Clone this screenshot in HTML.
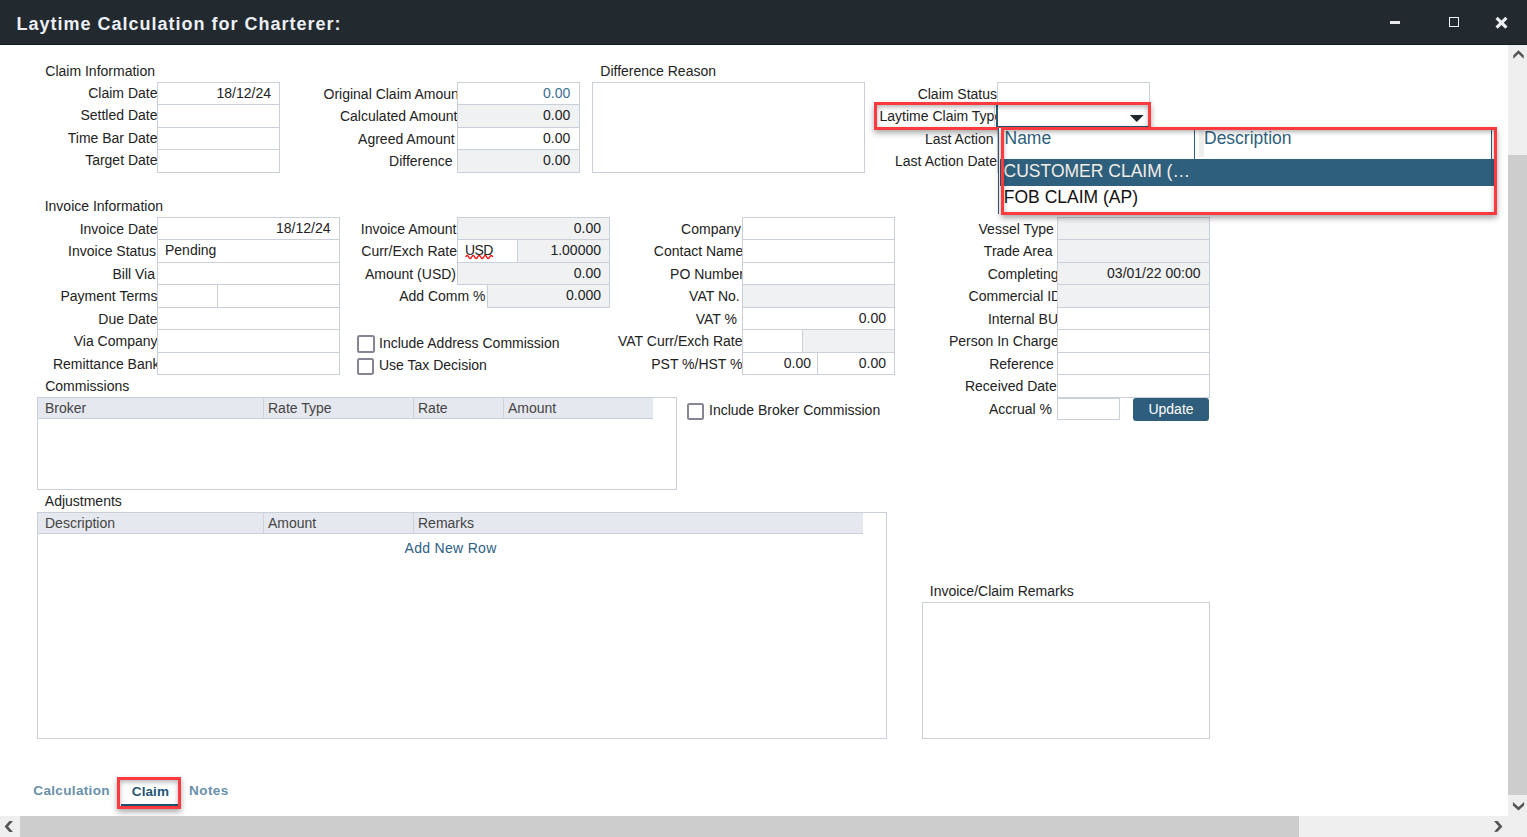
<!DOCTYPE html>
<html><head><meta charset="utf-8"><title>Laytime Calculation</title>
<style>
html,body{margin:0;padding:0;width:1527px;height:837px;overflow:hidden;background:#fff;}
body{position:relative;font-family:"Liberation Sans",sans-serif;}
.t{position:absolute;white-space:nowrap;}
.b{position:absolute;}
</style></head><body>
<div class="b" style="left:0px;top:0px;width:1527px;height:45px;background:#222a30;"></div>
<div class="b" style="left:0px;top:44px;width:1527px;height:1px;background:#141d22;"></div>
<div class="t" style="top:12.86px;font-size:18px;line-height:22px;color:#eceff3;font-weight:bold;letter-spacing:1px;left:16.5px;">Laytime Calculation for Charterer:</div>
<div class="b" style="left:1390px;top:20.5px;width:10px;height:3.0px;background:#e8eaed;"></div>
<div class="b" style="left:1449px;top:17px;width:7.9px;height:7.9px;border:1.3px solid #f4f5f7;"></div>
<svg class="b" style="left:1494px;top:15px" width="16" height="16" viewBox="0 0 16 16"><path d="M2.6 2.85 L12.4 12.65 M12.4 2.85 L2.6 12.65" stroke="#eceef1" stroke-width="3.2" stroke-linecap="butt"/></svg>
<div class="t" style="top:62.75px;font-size:14px;line-height:17px;color:#222;left:45.3px;">Claim Information</div>
<div class="t" style="top:85.05px;font-size:14px;line-height:17px;color:#222222;left:-242.5px;width:400px;text-align:right;">Claim Date</div>
<div class="t" style="top:107.05px;font-size:14px;line-height:17px;color:#222222;left:-242.5px;width:400px;text-align:right;">Settled Date</div>
<div class="t" style="top:130.05px;font-size:14px;line-height:17px;color:#222222;left:-242.5px;width:400px;text-align:right;">Time Bar Date</div>
<div class="t" style="top:152.05px;font-size:14px;line-height:17px;color:#222222;left:-242.5px;width:400px;text-align:right;">Target Date</div>
<div class="b" style="left:157px;top:82px;width:123px;height:23px;background:#fff;box-shadow:inset 0 0 0 1px #c9d0d9;"></div>
<div class="b" style="left:157px;top:104px;width:123px;height:24px;background:#fff;box-shadow:inset 0 0 0 1px #c9d0d9;"></div>
<div class="b" style="left:157px;top:127px;width:123px;height:23px;background:#fff;box-shadow:inset 0 0 0 1px #c9d0d9;"></div>
<div class="b" style="left:157px;top:149px;width:123px;height:24px;background:#fff;box-shadow:inset 0 0 0 1px #c9d0d9;"></div>
<div class="t" style="top:84.65px;font-size:14px;line-height:17px;color:#222222;left:-129px;width:400px;text-align:right;">18/12/24</div>
<div class="t" style="top:85.65px;font-size:14px;line-height:17px;color:#222222;left:58.89999999999998px;width:400px;text-align:right;">Original Claim Amoun</div>
<div class="t" style="top:107.65px;font-size:14px;line-height:17px;color:#222222;left:57.5px;width:400px;text-align:right;">Calculated Amount</div>
<div class="t" style="top:130.65px;font-size:14px;line-height:17px;color:#222222;left:54.60000000000002px;width:400px;text-align:right;">Agreed Amount</div>
<div class="t" style="top:152.65px;font-size:14px;line-height:17px;color:#222222;left:52.60000000000002px;width:400px;text-align:right;">Difference</div>
<div class="b" style="left:457px;top:82px;width:123px;height:23px;background:#fff;box-shadow:inset 0 0 0 1px #c9d0d9;"></div>
<div class="b" style="left:457px;top:104px;width:123px;height:24px;background:#eff1f3;box-shadow:inset 0 0 0 1px #c9d0d9;"></div>
<div class="b" style="left:457px;top:127px;width:123px;height:23px;background:#fff;box-shadow:inset 0 0 0 1px #c9d0d9;"></div>
<div class="b" style="left:457px;top:149px;width:123px;height:24px;background:#eff1f3;box-shadow:inset 0 0 0 1px #c9d0d9;"></div>
<div class="t" style="top:84.65px;font-size:14px;line-height:17px;color:#3b6f96;left:170.29999999999995px;width:400px;text-align:right;">0.00</div>
<div class="t" style="top:106.65px;font-size:14px;line-height:17px;color:#222222;left:170.29999999999995px;width:400px;text-align:right;">0.00</div>
<div class="t" style="top:129.65px;font-size:14px;line-height:17px;color:#222222;left:170.29999999999995px;width:400px;text-align:right;">0.00</div>
<div class="t" style="top:151.65px;font-size:14px;line-height:17px;color:#222222;left:170.29999999999995px;width:400px;text-align:right;">0.00</div>
<div class="t" style="top:62.75px;font-size:14px;line-height:17px;color:#222;left:600.3px;">Difference Reason</div>
<div class="b" style="left:592px;top:82px;width:273px;height:91px;background:#fff;box-shadow:inset 0 0 0 1px #c9d0d9;"></div>
<div class="t" style="top:85.65px;font-size:14px;line-height:17px;color:#222222;left:597px;width:400px;text-align:right;">Claim Status</div>
<div class="t" style="top:107.65px;font-size:14px;line-height:17px;color:#222222;left:879.5px;width:116.5px;overflow:hidden;">Laytime Claim Type</div>
<div class="t" style="top:130.65px;font-size:14px;line-height:17px;color:#222222;left:593.5px;width:400px;text-align:right;">Last Action</div>
<div class="t" style="top:152.65px;font-size:14px;line-height:17px;color:#222222;left:597px;width:400px;text-align:right;">Last Action Date</div>
<div class="b" style="left:997px;top:82px;width:153px;height:23.5px;background:#fff;box-shadow:inset 0 0 0 1px #c9d0d9;"></div>
<div class="b" style="left:996px;top:105px;width:154px;height:22px;background:#fff;border-left:2px solid #2a5a76;border-bottom:1px solid #2a5a76;box-sizing:border-box;"></div>
<div class="b" style="left:994px;top:105px;width:1px;height:21px;background:#cfd5dc;"></div>
<svg class="b" style="left:1128px;top:114px" width="17" height="9" viewBox="0 0 17 9"><path d="M1.8 1.1 L15.7 1.1 L8.75 7.9 Z" fill="#1f272d"/></svg>
<div class="b" style="left:997px;top:127px;width:153px;height:23.5px;background:#fff;box-shadow:inset 0 0 0 1px #c9d0d9;"></div>
<div class="b" style="left:997px;top:149.5px;width:153px;height:23.5px;background:#fff;box-shadow:inset 0 0 0 1px #c9d0d9;"></div>
<div class="b" style="left:874px;top:102px;width:277px;height:28px;box-sizing:border-box;border:3px solid #fd3b3e;box-shadow:0 3px 6px rgba(0,0,0,0.35), inset 0 2px 5px rgba(0,0,0,0.3);"></div>
<div class="t" style="top:197.65px;font-size:14px;line-height:17px;color:#222;left:44.7px;">Invoice Information</div>
<div class="t" style="top:220.65px;font-size:14px;line-height:17px;color:#222222;left:-242.5px;width:400px;text-align:right;">Invoice Date</div>
<div class="t" style="top:242.65px;font-size:14px;line-height:17px;color:#222222;left:-244px;width:400px;text-align:right;">Invoice Status</div>
<div class="t" style="top:265.65px;font-size:14px;line-height:17px;color:#222222;left:-245px;width:400px;text-align:right;">Bill Via</div>
<div class="t" style="top:287.65px;font-size:14px;line-height:17px;color:#222222;left:-242.5px;width:400px;text-align:right;">Payment Terms</div>
<div class="t" style="top:310.65px;font-size:14px;line-height:17px;color:#222222;left:-242.5px;width:400px;text-align:right;">Due Date</div>
<div class="t" style="top:332.65px;font-size:14px;line-height:17px;color:#222222;left:-242.5px;width:400px;text-align:right;">Via Company</div>
<div class="t" style="top:355.65px;font-size:14px;line-height:17px;color:#222222;left:-240.5px;width:400px;text-align:right;">Remittance Bank</div>
<div class="b" style="left:157px;top:217px;width:183px;height:23px;background:#fff;box-shadow:inset 0 0 0 1px #c9d0d9;"></div>
<div class="b" style="left:157px;top:239px;width:183px;height:24px;background:#fff;box-shadow:inset 0 0 0 1px #c9d0d9;"></div>
<div class="b" style="left:157px;top:262px;width:183px;height:23px;background:#fff;box-shadow:inset 0 0 0 1px #c9d0d9;"></div>
<div class="b" style="left:157px;top:284px;width:61px;height:24px;background:#fff;box-shadow:inset 0 0 0 1px #c9d0d9;"></div>
<div class="b" style="left:217px;top:284px;width:123px;height:24px;background:#fff;box-shadow:inset 0 0 0 1px #c9d0d9;"></div>
<div class="b" style="left:157px;top:307px;width:183px;height:23px;background:#fff;box-shadow:inset 0 0 0 1px #c9d0d9;"></div>
<div class="b" style="left:157px;top:329px;width:183px;height:24px;background:#fff;box-shadow:inset 0 0 0 1px #c9d0d9;"></div>
<div class="b" style="left:157px;top:352px;width:183px;height:23px;background:#fff;box-shadow:inset 0 0 0 1px #c9d0d9;"></div>
<div class="t" style="top:219.65px;font-size:14px;line-height:17px;color:#222222;left:-69.5px;width:400px;text-align:right;">18/12/24</div>
<div class="t" style="top:241.65px;font-size:14px;line-height:17px;color:#222;left:165px;">Pending</div>
<div class="t" style="top:220.65px;font-size:14px;line-height:17px;color:#222222;left:56.5px;width:400px;text-align:right;">Invoice Amount</div>
<div class="t" style="top:242.65px;font-size:14px;line-height:17px;color:#222222;left:57px;width:400px;text-align:right;">Curr/Exch Rate</div>
<div class="t" style="top:265.65px;font-size:14px;line-height:17px;color:#222222;left:56px;width:400px;text-align:right;">Amount (USD)</div>
<div class="t" style="top:287.65px;font-size:14px;line-height:17px;color:#222222;left:85.5px;width:400px;text-align:right;">Add Comm %</div>
<div class="b" style="left:457px;top:217px;width:153px;height:23px;background:#eff1f3;box-shadow:inset 0 0 0 1px #c9d0d9;"></div>
<div class="b" style="left:457px;top:239px;width:61px;height:24px;background:#fff;box-shadow:inset 0 0 0 1px #c9d0d9;"></div>
<div class="b" style="left:517px;top:239px;width:93px;height:24px;background:#eff1f3;box-shadow:inset 0 0 0 1px #c9d0d9;"></div>
<div class="b" style="left:457px;top:262px;width:153px;height:23px;background:#eff1f3;box-shadow:inset 0 0 0 1px #c9d0d9;"></div>
<div class="b" style="left:487px;top:284px;width:123px;height:24px;background:#eff1f3;box-shadow:inset 0 0 0 1px #c9d0d9;"></div>
<div class="t" style="top:219.65px;font-size:14px;line-height:17px;color:#222222;left:201px;width:400px;text-align:right;">0.00</div>
<div class="t" style="top:241.65px;font-size:14px;line-height:17px;color:#222222;left:201px;width:400px;text-align:right;">1.00000</div>
<div class="t" style="top:264.65px;font-size:14px;line-height:17px;color:#222222;left:201px;width:400px;text-align:right;">0.00</div>
<div class="t" style="top:286.65px;font-size:14px;line-height:17px;color:#222222;left:201px;width:400px;text-align:right;">0.000</div>
<div class="t" style="top:241.65px;font-size:14px;line-height:17px;color:#222;letter-spacing:-0.6px;left:465px;">USD</div>
<svg class="b" style="left:465px;top:253.8px" width="30" height="6" viewBox="0 0 30 6"><path d="M0.7 3 Q2.2 0 3.7 3 T6.7 3 T9.7 3 T12.7 3 T15.7 3 T18.7 3 T21.7 3 T24.7 3 T27.7 3" stroke="#f01010" stroke-width="1.4" fill="none"/></svg>
<div class="b" style="left:357px;top:335px;width:18px;height:18px;box-sizing:border-box;border:2px solid #858594;border-radius:2.5px;background:#fff"></div>
<div class="t" style="top:334.65px;font-size:14px;line-height:17px;color:#222222;left:379px;">Include Address Commission</div>
<div class="b" style="left:357px;top:358px;width:17px;height:17px;box-sizing:border-box;border:2px solid #858594;border-radius:2.5px;background:#fff"></div>
<div class="t" style="top:357.15px;font-size:14px;line-height:17px;color:#222222;left:379px;">Use Tax Decision</div>
<div class="t" style="top:220.65px;font-size:14px;line-height:17px;color:#222222;left:341px;width:400px;text-align:right;">Company</div>
<div class="t" style="top:242.65px;font-size:14px;line-height:17px;color:#222222;left:343.29999999999995px;width:400px;text-align:right;">Contact Name</div>
<div class="t" style="top:265.65px;font-size:14px;line-height:17px;color:#222222;left:344px;width:400px;text-align:right;">PO Number</div>
<div class="t" style="top:287.65px;font-size:14px;line-height:17px;color:#222222;left:339.70000000000005px;width:400px;text-align:right;">VAT No.</div>
<div class="t" style="top:310.65px;font-size:14px;line-height:17px;color:#222222;left:337px;width:400px;text-align:right;">VAT %</div>
<div class="t" style="top:332.65px;font-size:14px;line-height:17px;color:#222222;left:342.5px;width:400px;text-align:right;">VAT Curr/Exch Rate</div>
<div class="t" style="top:355.65px;font-size:14px;line-height:17px;color:#222222;left:342.5px;width:400px;text-align:right;">PST %/HST %</div>
<div class="b" style="left:742px;top:217px;width:153px;height:23px;background:#fff;box-shadow:inset 0 0 0 1px #c9d0d9;"></div>
<div class="b" style="left:742px;top:239px;width:153px;height:24px;background:#fff;box-shadow:inset 0 0 0 1px #c9d0d9;"></div>
<div class="b" style="left:742px;top:262px;width:153px;height:23px;background:#fff;box-shadow:inset 0 0 0 1px #c9d0d9;"></div>
<div class="b" style="left:742px;top:284px;width:153px;height:24px;background:#eff1f3;box-shadow:inset 0 0 0 1px #c9d0d9;"></div>
<div class="b" style="left:742px;top:307px;width:153px;height:23px;background:#fff;box-shadow:inset 0 0 0 1px #c9d0d9;"></div>
<div class="b" style="left:742px;top:329px;width:61px;height:24px;background:#fff;box-shadow:inset 0 0 0 1px #c9d0d9;"></div>
<div class="b" style="left:802px;top:329px;width:93px;height:24px;background:#eff1f3;box-shadow:inset 0 0 0 1px #c9d0d9;"></div>
<div class="b" style="left:742px;top:352px;width:76px;height:23px;background:#fff;box-shadow:inset 0 0 0 1px #c9d0d9;"></div>
<div class="b" style="left:817px;top:352px;width:78px;height:23px;background:#fff;box-shadow:inset 0 0 0 1px #c9d0d9;"></div>
<div class="t" style="top:309.65px;font-size:14px;line-height:17px;color:#222222;left:486px;width:400px;text-align:right;">0.00</div>
<div class="t" style="top:354.65px;font-size:14px;line-height:17px;color:#222222;left:411px;width:400px;text-align:right;">0.00</div>
<div class="t" style="top:354.65px;font-size:14px;line-height:17px;color:#222222;left:486px;width:400px;text-align:right;">0.00</div>
<div class="t" style="top:220.65px;font-size:14px;line-height:17px;color:#222222;left:653.8px;width:400px;text-align:right;">Vessel Type</div>
<div class="t" style="top:242.65px;font-size:14px;line-height:17px;color:#222222;left:652.5999999999999px;width:400px;text-align:right;">Trade Area</div>
<div class="t" style="top:265.65px;font-size:14px;line-height:17px;color:#222222;left:658.5px;width:400px;text-align:right;">Completing</div>
<div class="t" style="top:287.65px;font-size:14px;line-height:17px;color:#222222;left:661.2px;width:400px;text-align:right;">Commercial ID</div>
<div class="t" style="top:310.65px;font-size:14px;line-height:17px;color:#222222;left:658px;width:400px;text-align:right;">Internal BU</div>
<div class="t" style="top:332.65px;font-size:14px;line-height:17px;color:#222222;left:658.7px;width:400px;text-align:right;">Person In Charge</div>
<div class="t" style="top:355.65px;font-size:14px;line-height:17px;color:#222222;left:653.8px;width:400px;text-align:right;">Reference</div>
<div class="t" style="top:377.65px;font-size:14px;line-height:17px;color:#222222;left:656.8px;width:400px;text-align:right;">Received Date</div>
<div class="t" style="top:400.65px;font-size:14px;line-height:17px;color:#222222;left:652px;width:400px;text-align:right;">Accrual %</div>
<div class="b" style="left:1057px;top:217px;width:153px;height:23px;background:#eff1f3;box-shadow:inset 0 0 0 1px #c9d0d9;"></div>
<div class="b" style="left:1057px;top:239px;width:153px;height:24px;background:#eff1f3;box-shadow:inset 0 0 0 1px #c9d0d9;"></div>
<div class="b" style="left:1057px;top:262px;width:153px;height:23px;background:#eff1f3;box-shadow:inset 0 0 0 1px #c9d0d9;"></div>
<div class="b" style="left:1057px;top:284px;width:153px;height:24px;background:#eff1f3;box-shadow:inset 0 0 0 1px #c9d0d9;"></div>
<div class="b" style="left:1057px;top:307px;width:153px;height:23px;background:#fff;box-shadow:inset 0 0 0 1px #c9d0d9;"></div>
<div class="b" style="left:1057px;top:329px;width:153px;height:24px;background:#fff;box-shadow:inset 0 0 0 1px #c9d0d9;"></div>
<div class="b" style="left:1057px;top:352px;width:153px;height:23px;background:#fff;box-shadow:inset 0 0 0 1px #c9d0d9;"></div>
<div class="b" style="left:1057px;top:374px;width:153px;height:24px;background:#fff;box-shadow:inset 0 0 0 1px #c9d0d9;"></div>
<div class="b" style="left:1057px;top:397.5px;width:63px;height:22.5px;background:#fff;box-shadow:inset 0 0 0 1px #c9d0d9;"></div>
<div class="t" style="top:264.65px;font-size:14px;line-height:17px;color:#222222;left:800.5px;width:400px;text-align:right;">03/01/22 00:00</div>
<div class="b" style="left:1133px;top:398px;width:76px;height:23px;background:#2e5e7b;border-radius:3px;"></div>
<div class="t" style="top:401.15px;font-size:14px;line-height:17px;color:#fff;left:871px;width:600px;text-align:center;">Update</div>
<div class="t" style="top:377.65px;font-size:14px;line-height:17px;color:#222;left:45.2px;">Commissions</div>
<div class="b" style="left:37px;top:397px;width:640px;height:93px;background:#fff;box-shadow:inset 0 0 0 1px #c9d0d9;"></div>
<div class="b" style="left:38px;top:398px;width:615px;height:20px;background:#e6e8ef;"></div>
<div class="b" style="left:38px;top:417.5px;width:615px;height:1.5px;background:#c9d0d9;"></div>
<div class="b" style="left:263px;top:398px;width:1px;height:20px;background:#cfd4dc;"></div>
<div class="b" style="left:413px;top:398px;width:1px;height:20px;background:#cfd4dc;"></div>
<div class="b" style="left:503px;top:398px;width:1px;height:20px;background:#cfd4dc;"></div>
<div class="t" style="top:399.65px;font-size:14px;line-height:17px;color:#444;left:45px;">Broker</div>
<div class="t" style="top:399.65px;font-size:14px;line-height:17px;color:#444;left:268px;">Rate Type</div>
<div class="t" style="top:399.65px;font-size:14px;line-height:17px;color:#444;left:418px;">Rate</div>
<div class="t" style="top:399.65px;font-size:14px;line-height:17px;color:#444;left:508px;">Amount</div>
<div class="b" style="left:687px;top:403px;width:17px;height:17px;box-sizing:border-box;border:2px solid #858594;border-radius:2.5px;background:#fff"></div>
<div class="t" style="top:402.15px;font-size:14px;line-height:17px;color:#222222;left:709px;">Include Broker Commission</div>
<div class="t" style="top:493.15px;font-size:14px;line-height:17px;color:#222;left:44.8px;">Adjustments</div>
<div class="b" style="left:37px;top:512px;width:850px;height:227px;background:#fff;box-shadow:inset 0 0 0 1px #c9d0d9;"></div>
<div class="b" style="left:38px;top:513px;width:825px;height:20px;background:#e6e8ef;"></div>
<div class="b" style="left:38px;top:532.5px;width:825px;height:1.5px;background:#c9d0d9;"></div>
<div class="b" style="left:263px;top:513px;width:1px;height:20px;background:#cfd4dc;"></div>
<div class="b" style="left:413px;top:513px;width:1px;height:20px;background:#cfd4dc;"></div>
<div class="t" style="top:515.15px;font-size:14px;line-height:17px;color:#444;left:45px;">Description</div>
<div class="t" style="top:515.15px;font-size:14px;line-height:17px;color:#444;left:268px;">Amount</div>
<div class="t" style="top:515.15px;font-size:14px;line-height:17px;color:#444;left:418px;">Remarks</div>
<div class="t" style="top:539.95px;font-size:14px;line-height:17px;color:#2c6088;letter-spacing:0.3px;left:150.60000000000002px;width:600px;text-align:center;">Add New Row</div>
<div class="t" style="top:582.65px;font-size:14px;line-height:17px;color:#222;left:929.8px;">Invoice/Claim Remarks</div>
<div class="b" style="left:922px;top:602px;width:288px;height:137px;background:#fff;box-shadow:inset 0 0 0 1px #c9d0d9;"></div>
<div class="t" style="top:783.32px;font-size:13.5px;line-height:16px;color:#6890aa;font-weight:bold;letter-spacing:0.35px;left:33.3px;">Calculation</div>
<div class="t" style="top:784.32px;font-size:13.5px;line-height:16px;color:#255775;font-weight:bold;letter-spacing:0.1px;left:131.8px;">Claim</div>
<div class="b" style="left:121px;top:804px;width:57px;height:2px;background:#1f5573;"></div>
<div class="t" style="top:783.32px;font-size:13.5px;line-height:16px;color:#6890aa;font-weight:bold;letter-spacing:0.45px;left:189px;">Notes</div>
<div class="b" style="left:117px;top:777px;width:64px;height:32px;box-sizing:border-box;border:3px solid #fd3b3e;box-shadow:0 3px 6px rgba(0,0,0,0.35), inset 0 2px 5px rgba(0,0,0,0.3);"></div>
<div class="b" style="left:998px;top:128px;width:498px;height:86px;background:#fff;border-left:1.5px solid #2f5f7c;box-sizing:border-box;"></div>
<div class="b" style="left:1194px;top:130px;width:1px;height:29px;background:#2f5f7c;"></div>
<div class="b" style="left:1491px;top:130px;width:1px;height:29px;background:#2f5f7c;"></div>
<div class="b" style="left:1199px;top:130px;width:4.5px;height:27px;background:#eeeeee;"></div>
<div class="t" style="top:128.04px;font-size:17.5px;line-height:21px;color:#2f5f7e;left:1004.5px;">Name</div>
<div class="t" style="top:128.04px;font-size:17.5px;line-height:21px;color:#2f5f7e;left:1204px;">Description</div>
<div class="b" style="left:1000px;top:159px;width:494px;height:27px;background:#2e5f7c;"></div>
<div class="t" style="top:161.24px;font-size:17.5px;line-height:21px;color:#f2ede6;left:1003.6px;">CUSTOMER CLAIM (…</div>
<div class="t" style="top:187.44px;font-size:17.5px;line-height:21px;color:#111;left:1003.8px;">FOB CLAIM (AP)</div>
<div class="b" style="left:1001px;top:127px;width:496px;height:88px;box-sizing:border-box;border:3px solid #fd3b3e;box-shadow:0 3px 6px rgba(0,0,0,0.35), inset 0 2px 5px rgba(0,0,0,0.3);"></div>
<div class="b" style="left:1508px;top:45px;width:19px;height:771px;background:#efefef;"></div>
<div class="b" style="left:1508px;top:155px;width:19px;height:640px;background:#cdcdcd;"></div>
<svg class="b" style="left:1508px;top:45px" width="19" height="20" viewBox="0 0 19 20"><path d="M5.3 10.2 L10.5 5.2 L15.7 10.2 L15.7 13.8 L10.5 8.8 L5.3 13.8 Z" fill="#555"/></svg>
<svg class="b" style="left:1508px;top:796px" width="19" height="20" viewBox="0 0 19 20"><path d="M4.9 6 L10.5 11 L16.1 6 L16.1 9.5 L10.5 14.5 L4.9 9.5 Z" fill="#555"/></svg>
<div class="b" style="left:0px;top:816px;width:1527px;height:21px;background:#efefef;"></div>
<div class="b" style="left:20px;top:816px;width:1279px;height:21px;background:#cdcdcd;"></div>
<svg class="b" style="left:0px;top:816px" width="20" height="21" viewBox="0 0 20 21"><path d="M9.4 5 L13 5 L8.1 10.5 L13 16 L9.4 16 L4.6 10.5 Z" fill="#555"/></svg>
<svg class="b" style="left:1487px;top:816px" width="20" height="21" viewBox="0 0 20 21"><path d="M7 5 L10.6 5 L15.4 10.4 L10.6 15.8 L7 15.8 L11.8 10.4 Z" fill="#555"/></svg>
</body></html>
